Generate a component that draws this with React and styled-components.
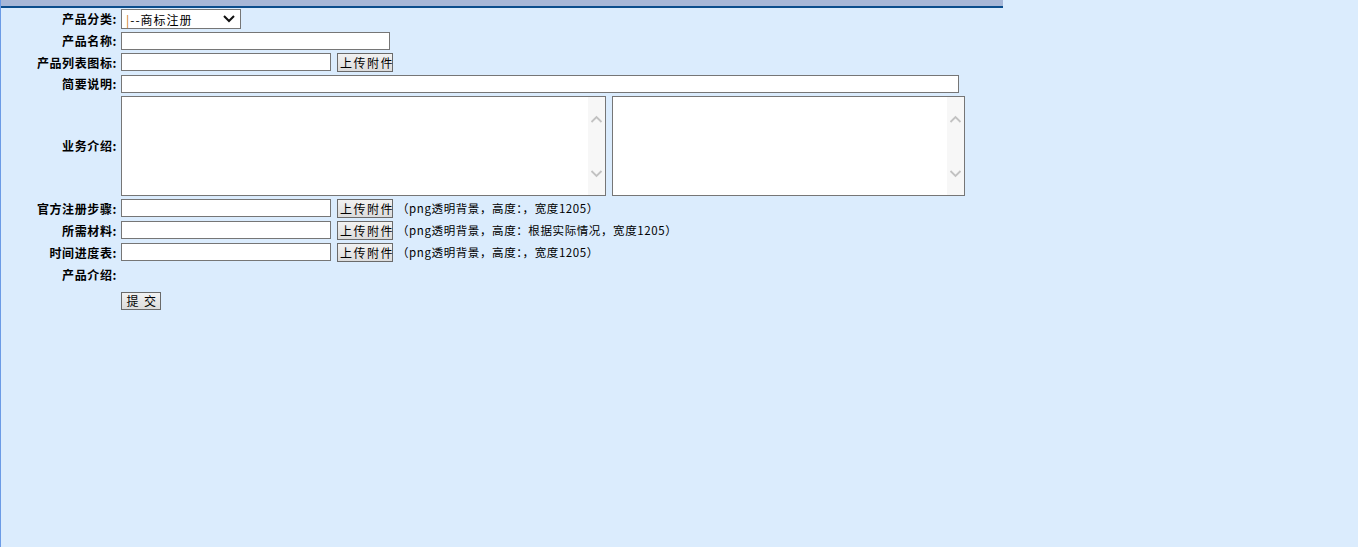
import styled, { createGlobalStyle } from "styled-components";

const Global = createGlobalStyle`
  html, body {
    margin: 0;
    padding: 0;
    background: #dbecfd;
  }
  body {
    font-family: "Noto Sans CJK SC", "Liberation Sans", sans-serif;
    font-size: 12px;
    color: #000;
  }
`;

const Page = styled.div`
  min-height: 100vh;
  box-sizing: border-box;
  border-left: 1px solid #6b9be6;
  background: #dbecfd;
`;

const TopBar = styled.div`
  width: 1002px;
  height: 6px;
  background: #a7b7d7;
  border-bottom: 2px solid #0b4d8c;
`;

const Form = styled.form`
  display: flex;
  flex-direction: column;
  gap: 3px;
  padding-top: 1px;
`;

const Row = styled.div`
  display: flex;
  align-items: center;
  min-height: ${(p) => p.$h || 18}px;
  margin-top: ${(p) => p.$top || 0}px;
`;

const Label = styled.label`
  width: 116px;
  flex: none;
  text-align: right;
  font-weight: bold;
  font-size: 12px;
  line-height: 14px;
  letter-spacing: 0.6px;
  margin-right: 4px;
  white-space: nowrap;
`;

const Field = styled.div`
  display: flex;
  align-items: flex-start;
  gap: ${(p) => p.$gap || 6}px;
`;

const Input = styled.input`
  box-sizing: border-box;
  width: ${(p) => p.$w}px;
  height: 18px;
  margin: 0;
  padding: 1px 2px;
  border: 1px solid #767676;
  background: #fff;
  font: inherit;
`;

const Select = styled.div`
  box-sizing: border-box;
  width: 120px;
  height: 20px;
  border: 1px solid #767676;
  background: #fff;
  display: flex;
  align-items: center;
  justify-content: space-between;
  padding: 0 4px 0 4px;
  font-size: 12px;
  letter-spacing: 1px;
  white-space: nowrap;
`;

const Button = styled.button`
  box-sizing: border-box;
  height: ${(p) => p.$h || 19}px;
  width: ${(p) => p.$w || 56}px;
  margin: 0;
  padding: 0 0 0 2px;
  border: 1px solid #6a6a6a;
  background: linear-gradient(#f2f2f2, #dcdcdc);
  font-family: "Noto Sans CJK SC", sans-serif;
  font-size: 12px;
  line-height: 16px;
  letter-spacing: 1.5px;
  white-space: nowrap;
  text-align: center;
  color: #000;
`;

const Note = styled.span`
  font-size: 11.5px;
  line-height: 19px;
  letter-spacing: 0.6px;
  white-space: nowrap;
  margin-left: -2px;
`;

const TextBox = styled.div`
  box-sizing: border-box;
  width: ${(p) => p.$w}px;
  height: 100px;
  border: 1px solid #767676;
  background: #fff;
  display: flex;
`;

const Area = styled.textarea`
  flex: 1;
  border: none;
  outline: none;
  resize: none;
  margin: 0;
  padding: 2px;
  overflow: hidden;
`;

const Track = styled.div`
  width: 17px;
  flex: none;
  background: #f7f7f7;
  display: flex;
  flex-direction: column;
  justify-content: space-between;
  padding: 14px 0 13px;
`;

const Chevron = ({ up }) => (
  <svg width="17" height="17" viewBox="0 0 17 17">
    <path
      d={up ? "M3.5 11 L8.5 6 L13.5 11" : "M3.5 6 L8.5 11 L13.5 6"}
      fill="none"
      stroke="#c2c2c2"
      strokeWidth="1.8"
    />
  </svg>
);

const Scroller = ({ w }) => (
  <TextBox $w={w}>
    <Area />
    <Track>
      <Chevron up />
      <Chevron />
    </Track>
  </TextBox>
);

const uploadRows = [
  { label: "官方注册步骤:", note: "（png透明背景，高度：，宽度1205）" },
  { label: "所需材料:", note: "（png透明背景，高度：根据实际情况，宽度1205）" },
  { label: "时间进度表:", note: "（png透明背景，高度：，宽度1205）" },
];

export default function App() {
  return (
    <Page>
      <Global />
      <TopBar />
      <Form onSubmit={(e) => e.preventDefault()}>
        <Row $h={20}>
          <Label>产品分类:</Label>
          <Select>
            <span>
              <span style={{ color: "#c77a1a" }}>|</span>--商标注册
            </span>
            <svg width="14" height="10" viewBox="0 0 14 10">
              <path d="M2 2 L7 7 L12 2" fill="none" stroke="#111" strokeWidth="2" />
            </svg>
          </Select>
        </Row>
        <Row>
          <Label>产品名称:</Label>
          <Input $w={269} />
        </Row>
        <Row $h={19}>
          <Label>产品列表图标:</Label>
          <Field>
            <Input $w={210} />
            <Button type="button">上传附件</Button>
          </Field>
        </Row>
        <Row>
          <Label>简要说明:</Label>
          <Input $w={838} />
        </Row>
        <Row $h={100}>
          <Label>业务介绍:</Label>
          <Field $gap={6}>
            <Scroller w={485} />
            <Scroller w={353} />
          </Field>
        </Row>
        {uploadRows.map((r) => (
          <Row $h={19} key={r.label}>
            <Label>{r.label}</Label>
            <Field>
              <Input $w={210} />
              <Button type="button">上传附件</Button>
              <Note>{r.note}</Note>
            </Field>
          </Row>
        ))}
        <Row $h={20}>
          <Label>产品介绍:</Label>
        </Row>
        <Row $h={18} $top={4}>
          <Label />
          <Button $w={40} $h={18} type="submit">
            提 交
          </Button>
        </Row>
      </Form>
    </Page>
  );
}
